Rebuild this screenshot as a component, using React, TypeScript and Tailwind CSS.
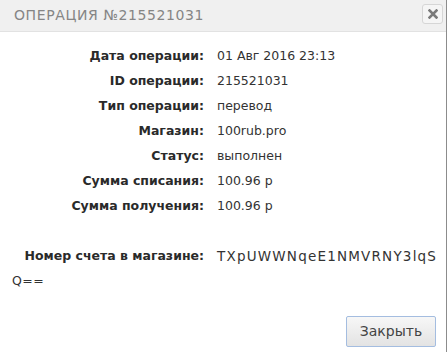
const rows: [string, string][] = [
  ["Дата операции:", "01 Авг 2016 23:13"],
  ["ID операции:", "215521031"],
  ["Тип операции:", "перевод"],
  ["Магазин:", "100rub.pro"],
  ["Статус:", "выполнен"],
  ["Сумма списания:", "100.96 р"],
  ["Сумма получения:", "100.96 р"],
];

export default function App() {
  return (
    <div
      className="w-[447px] h-[352px] bg-white border-r border-[#8c8c8c] flex flex-col text-[#333]"
      style={{ fontFamily: '"DejaVu Sans", "Noto Sans", sans-serif' }}
    >
      {/* Header */}
      <div className="h-[32px] shrink-0 bg-[#f0f0f0] border-b border-[#e2e2e2] flex items-center justify-between pl-[14px] pr-[3px]">
        <span className="text-[14px] tracking-[0.6px] text-[#858585]">ОПЕРАЦИЯ №215521031</span>
        <button className="w-[21px] h-[20px] mb-[3px] rounded-[3px] border border-[#d6d6d6] bg-[#f5f5f5] flex items-center justify-center">
          <svg width="10" height="10" viewBox="0 0 10 10">
            <path d="M1.5 1.5 L8.5 8.5 M8.5 1.5 L1.5 8.5" stroke="#7a7a7a" strokeWidth="2.6" strokeLinecap="square" />
          </svg>
        </button>
      </div>

      {/* Details */}
      <div className="pt-[12px] flex flex-col text-[12.5px]">
        {rows.map(([label, value]) => (
          <div key={label} className="h-[25px] flex items-center">
            <span className="w-[204px] text-right font-bold text-[#2a2a2a]">{label}</span>
            <span className="pl-[13px]">{value}</span>
          </div>
        ))}
        <div className="h-[25px]" />
        <div className="h-[25px] flex items-center">
          <span className="w-[204px] text-right font-bold text-[#2a2a2a]">Номер счета в магазине:</span>
          <span className="pl-[13px] text-[13.5px] tracking-[1.2px] whitespace-nowrap">TXpUWWNqeE1NMVRNY3lqS</span>
        </div>
        <div className="h-[25px] flex items-center pl-[12px] tracking-[0.5px]">Q==</div>
      </div>

      {/* Footer */}
      <div className="mt-auto flex justify-end pr-[10px] pb-[5px]">
        <button className="w-[90px] h-[31px] rounded-[2px] border border-[#a4bde0] bg-gradient-to-b from-[#f7f7f7] to-[#e3e3e3] text-[14px] text-[#444]">
          Закрыть
        </button>
      </div>
    </div>
  );
}
